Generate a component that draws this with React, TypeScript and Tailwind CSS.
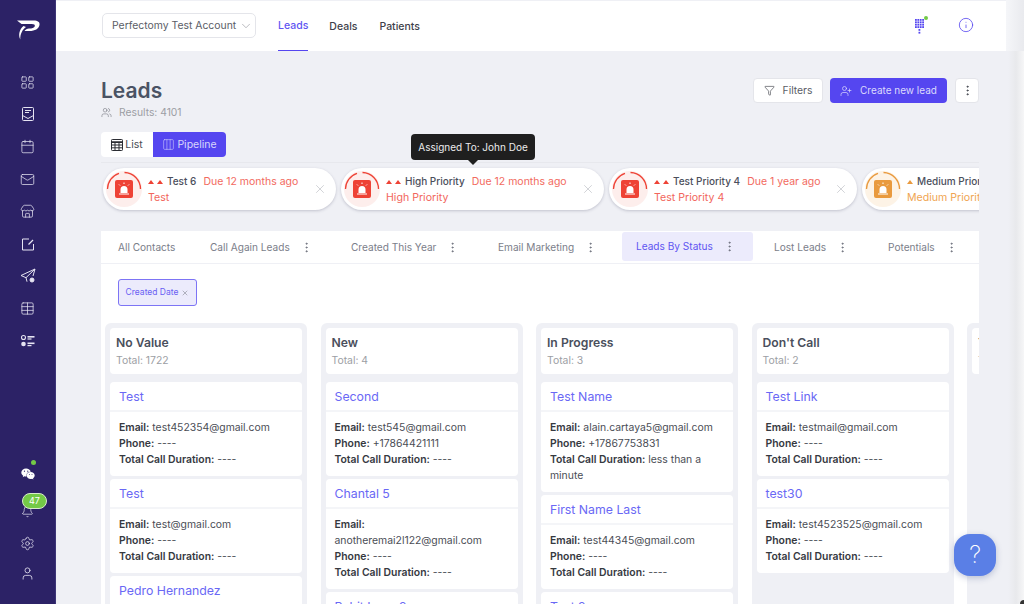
import React from "react";
import { LayoutGrid, Calendar, Mail, Store, Table, Settings, User, ChevronDown, Info, Funnel, UserPlus, EllipsisVertical, X, Columns3, Users, Bell } from "lucide-react";
import { FaWeixin } from "react-icons/fa";

const Report = () => (
  <svg width="16" height="16" viewBox="0 0 16 16" fill="none" stroke="currentColor" strokeWidth="1">
    <rect x="2.500" y="1.500" width="11" height="13" rx="1" />
    <path d="M5 4.500h6M5 6.500h4M2.500 9.500l5.500 3 5.500-3" />
  </svg>
);
const EditBox = () => (
  <svg width="16" height="16" viewBox="0 0 16 16" fill="none" stroke="currentColor" strokeWidth="1">
    <path d="M9 3H2.500v11h11V8" />
    <path d="M8.500 8.500L13 4" strokeWidth="1.300" />
  </svg>
);
const SendGear = () => (
  <svg width="18" height="18" viewBox="0 0 18 18" fill="none" stroke="currentColor" strokeWidth="1">
    <path d="M16 2L2 8.500l5 2.200L16 2zM16 2l-2 7M7 10.700l1 4" />
    <circle cx="13" cy="13" r="2" fill="currentColor" />
  </svg>
);
const ListDots = () => (
  <svg width="16" height="14" viewBox="0 0 16 14" fill="currentColor">
    <circle cx="3.500" cy="3.500" r="2" fill="none" stroke="currentColor" strokeWidth="1.100" />
    <circle cx="3.500" cy="10" r="2.300" />
    <rect x="7.500" y="2" width="7" height="1.600" />
    <rect x="7.500" y="4.400" width="4" height="1.200" />
    <rect x="7.500" y="8.500" width="7" height="1.600" />
    <rect x="7.500" y="11" width="4" height="1.200" />
  </svg>
);
const Logo = () => (
  <svg width="24" height="22" viewBox="0 0 24 22" fill="white">
    <path d="M1 0.500h16.500c4.500 0 6.500 1.500 6 4.500-.6 3.800-4.500 6-10 6H8.500c1-1.500 2.500-2.400 4.500-2.500 3 0 5.300-.6 5.800-2.300.4-1.500-.8-2.200-3-2.200H5.500z" />
    <path d="M10 7C6.500 9.500 4 14 4.300 19.500 2 15 3.500 9 7.500 6z" />
  </svg>
);
const Dialpad = () => (
  <svg width="14" height="16" viewBox="0 0 14 16" fill="#5546f0">
    {[0, 1, 2, 3].map((r) =>
      [0, 1, 2, 3].map((c) => <rect key={`${r}${c}`} x={2 + c * 2.4} y={1 + r * 2.4} width="1.800" height="1.800" />),
    )}
    <rect x="5.500" y="11" width="1.800" height="1.800" />
    <rect x="5.500" y="13.800" width="1.800" height="1.800" />
  </svg>
);
const GridTable = () => (
  <svg width="12" height="12" viewBox="0 0 12 12" fill="none" stroke="#2b2d33" strokeWidth="1">
    <rect x="0.500" y="0.500" width="11" height="11" rx="0.800" />
    <path d="M0.500 3.200h11" strokeWidth="1.800" />
    <path d="M0.500 6h11M0.500 8.800h11M4 3v8.500M8 3v8.500" />
  </svg>
);

const Alarm = ({ color }: { color: string }) => (
  <svg width="18" height="18" viewBox="0 0 18 18">
    <rect width="18" height="18" rx="2" fill={color} />
    <path d="M5.500 13v-3.500a3.500 3.500 0 0 1 7 0V13z" fill="white" />
    <path d="M4 14h10" stroke="white" strokeWidth="1" />
    <path d="M9 2.500v1.500M4 4.500l1 1M14 4.500l-1 1" stroke="white" strokeWidth="1" />
  </svg>
);

const Ring = ({ color, tint }: { color: string; tint: string }) => (
  <div className="relative w-[36px] h-[36px] shrink-0 rounded-full flex items-center justify-center" style={{ background: tint }}>
    <svg className="absolute inset-0" width="36" height="36" viewBox="0 0 36 36" fill="none">
      <path d="M1.500 18A16.500 16.500 0 0 1 13 2.300" stroke={color} strokeWidth="1.300" />
      <path d="M18.500 1.500A16.500 16.500 0 0 1 34.500 18" stroke={color} strokeWidth="1.300" />
    </svg>
    <Alarm color={color} />
  </div>
);

const Tri = ({ color }: { color: string }) => (
  <svg width="6" height="4" viewBox="0 0 6 4"><path d="M3 0l3 4H0z" fill={color} /></svg>
);

type ChipProps = { name: string; due?: string; sub: string; w: string; medium?: boolean };
const Chip = ({ name, due, sub, w, medium }: ChipProps) => {
  const c = medium ? "#e99a3e" : "#ee4235";
  const t = medium ? "#fdf3e6" : "#fdeeec";
  return (
    <div className={`${w} h-[42px] shrink-0 bg-white rounded-full flex items-center pl-[3px] shadow-[0_1px_3px_rgba(60,60,90,0.25)]`}>
      <Ring color={c} tint={t} />
      <div className="ml-[6px] flex-1 min-w-0 whitespace-nowrap">
        <div className="flex items-center h-[16px] mt-[1px] text-[10.5px]">
          <span className="flex gap-[3px] mr-[4px]"><Tri color={c} />{!medium && <Tri color={c} />}</span>
          <span className="text-[10px] text-[#4b4f5c] font-medium">{name}</span>
          {due && <span className="ml-[7px] text-[#f26a60]">{due}</span>}
        </div>
        <div className={`h-[16px] text-[10.6px] leading-[16px] ${medium ? "text-[#f0a552]" : "text-[#f2665c]"}`}>{sub}</div>
      </div>
      {due && <X className="shrink-0 mr-[9px] text-[#c4c6cc]" size={14} strokeWidth={1.3} />}
    </div>
  );
};

const Tab = ({ label, w, active, plain }: { label: string; w: string; active?: boolean; plain?: boolean }) => (
  <div className={`${w} h-full shrink-0 ${active ? "p-[1px_5px_2px_4px]" : ""}`}>
    <div className={`h-full flex items-center rounded-[3px] ${active ? "bg-[#ecebfc] pl-[14px] text-[#5f55f2]" : plain ? "pl-[17px] text-[#7b7e8a]" : "pl-[16px] text-[#7b7e8a]"}`}>
      <span className="mt-[1px]">{label}</span>
      {!plain && <EllipsisVertical className="ml-[10px] text-[#666a76]" size={13} strokeWidth={1.6} />}
    </div>
  </div>
);

type CardT = { title: string; lines: [string, string, boolean?][] };
const Card = ({ title, lines }: CardT) => (
  <div className="bg-white rounded-[4px] shrink-0">
    <div className="h-[30px] pt-[3px] border-b-2 border-[#f4f5f8] pl-[9px] flex items-center text-[12.3px] text-[#6a68f5]">{title}</div>
    <div className="px-[9px] py-[8px] text-[10.4px] leading-[16px] text-[#4a4d55]">
      {lines.map(([k, v, br], i) => (
        <div key={i}>
          <span className="font-semibold text-[#36393f]">{k}</span>
          {br ? <br /> : " "}
          {v}
        </div>
      ))}
    </div>
  </div>
);

const info = (email: string, phone = "----", dur = "----", br = false): [string, string, boolean?][] => [
  ["Email:", email, br],
  ["Phone:", phone],
  ["Total Call Duration:", dur],
];

const Column = ({ title, total, cards }: { title: string; total: string; cards: CardT[] }) => (
  <div className="w-[202px] shrink-0 bg-[#eff0f5] rounded-t-[6px] p-[5px] flex flex-col gap-[3px] h-[300px] overflow-hidden">
    <div className="bg-white rounded-[4px] h-[46px] shrink-0 mb-[5px] pl-[6px] pt-[6px]">
      <div className="text-[12.2px] leading-[18px] font-semibold text-[#4a4f5c]">{title}</div>
      <div className="text-[10.4px] leading-[15px] mt-[1px] text-[#9c9ea4]">{total}</div>
    </div>
    {cards.map((c) => <Card key={c.title} {...c} />)}
  </div>
);

export default function App() {
  const navIcons = [
    <LayoutGrid size={15} strokeWidth={1.2} />, <Report />, <Calendar size={15} strokeWidth={1.2} />, <Mail size={15} strokeWidth={1.2} />,
    <Store size={15} strokeWidth={1.2} />, <EditBox />, <SendGear />, <Table size={15} strokeWidth={1.2} />, <ListDots />,
  ];
  return (
    <div className="relative w-[1024px] h-[604px] overflow-hidden flex bg-[#eff0f5] font-['Inter',sans-serif]">
      <aside className="w-[56px] shrink-0 bg-[#2c2266] flex flex-col items-center text-[#e6e4f2] border-r border-[#3d3577]">
        <div className="h-[20px] shrink-0" />
        <Logo />
        <div className="h-[24px] shrink-0" />
        <div className="flex flex-col items-center">
          {navIcons.map((ic, i) => (
            <div key={i} className="h-[32.3px] flex items-center justify-center">{ic}</div>
          ))}
        </div>
        <div className="flex-1" />
        <div className="relative h-[24px] flex items-end justify-center">
          <span className="absolute top-[1px] left-[10px] w-[5px] h-[5px] rounded-full bg-[#74c947]" />
          <FaWeixin size={14} className="text-white mb-[2px]" />
        </div>
        <div className="relative h-[26px] mt-[15px] flex items-center justify-center">
          <Bell size={13} strokeWidth={1.3} className="mt-[1px]" />
          <span className="absolute -top-[5px] left-[1px] w-[25px] h-[16px] rounded-full bg-[#74c947] border border-[#d8eccb] text-white text-[9px] leading-[14px] text-center">47</span>
        </div>
        <div className="h-[24px] mt-[7px] flex items-center"><Settings size={15} strokeWidth={1.2} /></div>
        <div className="h-[24px] mt-[6px] mb-[19px] flex items-center"><User size={15} strokeWidth={1.3} /></div>
      </aside>

      <div className="flex-1 min-w-0 flex flex-col">
        <header className="h-[51px] shrink-0 w-[950px] bg-white border-t border-[#eff0f5] flex items-start pl-[46px] pr-[32px]">
          <div className="mt-[12px] w-[154px] h-[25px] border border-[#e4e5ea] rounded-[5px] flex items-center pl-[9px] text-[10.4px] whitespace-nowrap text-[#5a5d66]">
            Perfectomy Test Account
            <ChevronDown size={14} strokeWidth={1} className="ml-[3px] text-[#8a8c94]" />
          </div>
          <nav className="ml-[22px] h-[50px] flex text-[10.5px] font-medium text-[#3e414a]">
            <div className="h-full flex items-center pt-[1px] text-[#5f55f2] border-b-[1.5px] border-[#5546f0]">Leads</div>
            <div className="ml-[21px] flex items-center pt-[1px] h-full">Deals</div>
            <div className="ml-[22px] flex items-center pt-[1px] h-full">Patients</div>
          </nav>
          <div className="flex-1" />
          <div className="relative mt-[17px]">
            <Dialpad />
            <span className="absolute -top-[2px] right-[-1px] w-[4px] h-[4px] rounded-full bg-[#74c947]" />
          </div>
          <Info size={16} strokeWidth={1.2} className="ml-[31px] mt-[16px] text-[#5546f0]" />
        </header>

        <main className="w-[878px] ml-[45px] flex flex-col">
          <div className="flex items-start mt-[27px] h-[54px]">
            <div>
              <h1 className="text-[21px] leading-[26px] font-semibold text-[#4a5364]">Leads</h1>
              <div className="mt-[1px] flex items-center gap-[7px] text-[10.3px] leading-[14px] text-[#9c9ea4]">
                <Users size={11} strokeWidth={1.2} className="text-[#6a6d76]" /> Results: 4101
              </div>
            </div>
            <div className="ml-auto flex gap-[7px] items-center">
              <button className="w-[70px] h-[25px] bg-white rounded-[4px] border border-[#e4e5ea] flex items-center justify-center gap-[8px] text-[10.3px] text-[#5a5d66]">
                <Funnel size={11} strokeWidth={1.4} className="text-[#3e414a]" /> Filters
              </button>
              <button className="w-[117px] h-[25px] bg-[#5546f0] rounded-[4px] flex items-center justify-center gap-[8px] text-[10px] text-[#dcdafc]">
                <UserPlus size={12} strokeWidth={1.4} /> Create new lead
              </button>
              <button className="ml-[1px] w-[24px] h-[25px] bg-white rounded-[4px] border border-[#e4e5ea] flex items-center justify-center text-[#3e414a]">
                <EllipsisVertical size={13} strokeWidth={1.7} />
              </button>
            </div>
          </div>

          <div className="h-[31px] border-b border-[#e7e8ed]">
            <div className="flex w-[125px] h-[25px] text-[10.5px] rounded-[4px] overflow-hidden">
              <div className="w-[52px] bg-white flex items-center justify-center gap-[2px] text-[#4a4d55]">
                <GridTable /> List
              </div>
              <div className="flex-1 bg-[#5546f0] flex items-center justify-center gap-[2px] text-[#d8d6fb]">
                <Columns3 size={13} strokeWidth={1} /> Pipeline
              </div>
            </div>
          </div>

          <div className="flex gap-[5px] pl-[2px] pt-[5px] pb-[4px] h-[51px] overflow-hidden">
            <Chip w="w-[233px]" name="Test 6" due="Due 12 months ago" sub="Test" />
            <Chip w="w-[263px]" name="High Priority" due="Due 12 months ago" sub="High Priority" />
            <Chip w="w-[248px]" name="Test Priority 4" due="Due 1 year ago" sub="Test Priority 4" />
            <Chip w="w-[200px]" name="Medium Priority" sub="Medium Priority" medium />
          </div>

          <div className="mt-[17px] bg-white flex-1 h-[373px]">
            <div className="flex h-[33px] border-b border-[#eff0f5] text-[10.1px] rounded-t-[3px]">
              <Tab label="All Contacts" w="w-[93px]" plain />
              <Tab label="Call Again Leads" w="w-[141px]" />
              <Tab label="Created This Year" w="w-[147px]" />
              <Tab label="Email Marketing" w="w-[136px]" />
              <Tab label="Leads By Status" w="w-[140px]" active />
              <Tab label="Lost Leads" w="w-[114px]" />
              <Tab label="Potentials" w="w-[107px]" />
            </div>
            <div className="pl-[17px] pt-[15px] h-[59px]">
              <div className="w-[79px] h-[27px] border border-[#7d74f5] bg-[#ecebfc] rounded-[3px] flex items-center justify-center gap-[3px] text-[8.5px] text-[#6a60f3]">
                Created Date <X size={8} strokeWidth={1.4} className="text-[#6a6d76]" />
              </div>
            </div>
            <div className="flex gap-[13.5px] pl-[4px] overflow-hidden">
              <Column title="No Value" total="Total: 1722" cards={[
                { title: "Test", lines: info("test452354@gmail.com") },
                { title: "Test ", lines: info("test@gmail.com") },
                { title: "Pedro Hernandez", lines: info("pedro@gmail.com") },
              ]} />
              <Column title="New" total="Total: 4" cards={[
                { title: "Second", lines: info("test545@gmail.com", "+17864421111") },
                { title: "Chantal 5", lines: info("anotheremai2l122@gmail.com", "----", "----", true) },
                { title: "Rohit Lane 2", lines: info("rohit@gmail.com") },
              ]} />
              <Column title="In Progress" total="Total: 3" cards={[
                { title: "Test Name", lines: info("alain.cartaya5@gmail.com", "+17867753831", "less than a minute") },
                { title: "First Name Last", lines: info("test44345@gmail.com") },
                { title: "Test 2", lines: info("test2@gmail.com") },
              ]} />
              <Column title="Don't Call" total="Total: 2" cards={[
                { title: "Test Link", lines: info("testmail@gmail.com") },
                { title: "test30", lines: info("test4523525@gmail.com") },
              ]} />
              <Column title="Your" total="Total: 1" cards={[]} />
            </div>
          </div>
        </main>
      </div>

      <div className="absolute right-0 top-0 h-[51px] w-[18px] bg-gradient-to-r from-[#f5f6f9] to-[#e9eaee]" />
      <div className="absolute right-0 top-[51px] bottom-0 w-[16px] bg-gradient-to-r from-transparent via-[#e8e9ec] to-[#f6f6f7]" />
      <div className="absolute right-0 bottom-0 w-[4px] h-[4px] bg-[#333333] rounded-tl-full" />
      <div className="absolute left-[954px] top-[534px] w-[42px] h-[42px] rounded-[16px] bg-[#5a7fe6] shadow-[0_2px_6px_rgba(60,80,140,0.3)] flex items-center justify-center text-white text-[24px] font-extralight">?</div>
      <div className="absolute left-[411px] top-[134px] w-[124px] h-[26px] rounded-[4px] bg-[#1f1f1f] text-[#ececec] text-[10px] flex items-center justify-center">
        Assigned To: John Doe
        <span className="absolute left-[57px] top-[26px] border-x-[5px] border-x-transparent border-t-[5px] border-t-[#1f1f1f]" />
      </div>
    </div>
  );
}
